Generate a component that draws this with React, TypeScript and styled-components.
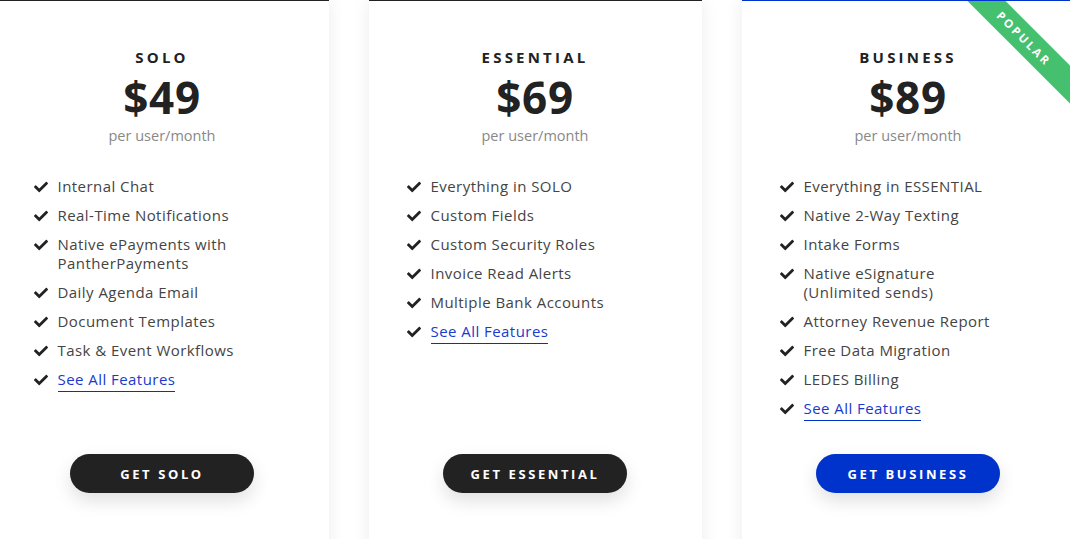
import React from "react";
import styled, { createGlobalStyle } from "styled-components";
import { FaCheck } from "react-icons/fa";

const Global = createGlobalStyle`
  html, body { margin: 0; padding: 0; background: #ffffff; overflow: hidden; }
  body { font-family: "Open Sans", "Noto Sans", sans-serif; }
  * { box-sizing: border-box; }
`;

const Row = styled.div`
  display: flex;
  justify-content: center;
  align-items: stretch;
  gap: 40px;
  width: 1070px;
`;

const Card = styled.div<{ $accent: string }>`
  position: relative;
  overflow: hidden;
  flex: 0 0 333px;
  background: #fff;
  border-top: 1px solid ${(p) => p.$accent};
  box-shadow: 0 0 16px rgba(0, 0, 0, 0.08);
  padding: 46px 30px 70px 38px;
  display: flex;
  flex-direction: column;
`;

const Title = styled.h2`
  margin: 0 8px 0 0;
  text-align: center;
  font-size: 15px;
  line-height: 20px;
  font-weight: 700;
  letter-spacing: 3.2px;
  color: #222;
`;

const Price = styled.div`
  margin: 6px 8px 0 0;
  text-align: center;
  font-size: 44px;
  line-height: 48px;
  font-weight: 700;
  letter-spacing: 0.6px;
  color: #222;
`;

const Period = styled.div`
  margin: 6px 8px 0 0;
  text-align: center;
  font-size: 14.5px;
  line-height: 18px;
  color: #888;
`;

const List = styled.ul`
  list-style: none;
  margin: 32px 0 0;
  padding: 0;
  display: flex;
  flex-direction: column;
  gap: 10px;
`;

const Item = styled.li`
  display: flex;
  align-items: flex-start;
  gap: 10px;
  font-size: 15px;
  line-height: 19px;
  letter-spacing: 0.45px;
  color: #444;
`;

const Check = styled.span`
  flex: 0 0 14px;
  display: flex;
  align-items: center;
  height: 19px;
  color: #222;
  font-size: 14px;
`;

const Link = styled.a`
  color: #1a3acb;
  text-decoration: none;
  border-bottom: 1px solid #0033cc;
  padding-bottom: 2px;
`;

const ButtonWrap = styled.div`
  margin-top: auto;
  padding-top: 36px;
  display: flex;
  justify-content: center;
  padding-right: 8px;
`;

const Button = styled.button<{ $bg: string }>`
  width: 184px;
  height: 39px;
  border: none;
  border-radius: 20px;
  background: ${(p) => p.$bg};
  color: #fff;
  font-family: "Open Sans", sans-serif;
  font-weight: 700;
  font-size: 13px;
  letter-spacing: 2.6px;
  box-shadow: 0 8px 18px rgba(0, 0, 0, 0.12);
  cursor: pointer;
`;

const Ribbon = styled.div`
  position: absolute;
  top: 24px;
  left: 202px;
  width: 160px;
  height: 27px;
  background: #45c06f;
  color: #fff;
  transform: rotate(45deg);
  display: flex;
  align-items: center;
  justify-content: center;
  font-size: 11.5px;
  font-weight: 700;
  letter-spacing: 2.4px;
`;

type Plan = {
  name: string;
  price: string;
  features: string[][];
  accent: string;
  btn: string;
  popular?: boolean;
};

const plans: Plan[] = [
  {
    name: "SOLO",
    price: "$49",
    accent: "#222",
    btn: "#222",
    features: [
      ["Internal Chat"],
      ["Real-Time Notifications"],
      ["Native ePayments with", "PantherPayments"],
      ["Daily Agenda Email"],
      ["Document Templates"],
      ["Task & Event Workflows"],
    ],
  },
  {
    name: "ESSENTIAL",
    price: "$69",
    accent: "#222",
    btn: "#222",
    features: [
      ["Everything in SOLO"],
      ["Custom Fields"],
      ["Custom Security Roles"],
      ["Invoice Read Alerts"],
      ["Multiple Bank Accounts"],
    ],
  },
  {
    name: "BUSINESS",
    price: "$89",
    accent: "#0033cc",
    btn: "#0033cc",
    popular: true,
    features: [
      ["Everything in ESSENTIAL"],
      ["Native 2-Way Texting"],
      ["Intake Forms"],
      ["Native eSignature", "(Unlimited sends)"],
      ["Attorney Revenue Report"],
      ["Free Data Migration"],
      ["LEDES Billing"],
    ],
  },
];

export default function App() {
  return (
    <>
      <Global />
      <Row>
        {plans.map((p) => (
          <Card key={p.name} $accent={p.accent}>
            {p.popular && <Ribbon>POPULAR</Ribbon>}
            <Title>{p.name}</Title>
            <Price>{p.price}</Price>
            <Period>per user/month</Period>
            <List>
              {p.features.map((f) => (
                <Item key={f[0]}>
                  <Check>
                    <FaCheck />
                  </Check>
                  <span>
                    {f.map((line, i) => (
                      <React.Fragment key={line}>
                        {i > 0 && <br />}
                        {line}
                      </React.Fragment>
                    ))}
                  </span>
                </Item>
              ))}
              <Item>
                <Check>
                  <FaCheck />
                </Check>
                <span>
                  <Link href="#">See All Features</Link>
                </span>
              </Item>
            </List>
            <ButtonWrap>
              <Button $bg={p.btn}>GET {p.name}</Button>
            </ButtonWrap>
          </Card>
        ))}
      </Row>
    </>
  );
}
